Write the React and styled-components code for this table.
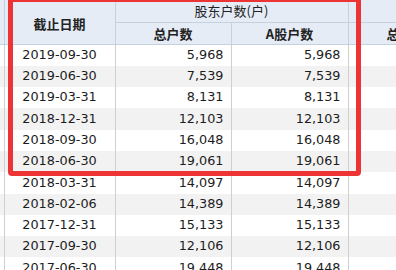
import React from "react";
import styled, { createGlobalStyle } from "styled-components";

const Global = createGlobalStyle`
  html, body { margin: 0; padding: 0; background: #ffffff; }
  body { font-family: "DejaVu Sans", "Noto Sans CJK SC", sans-serif; }
`;

const Page = styled.div`
  position: relative;
  width: 396px;
  height: 270px;
  overflow: hidden;
  background: #ffffff;
`;

const Table = styled.table`
  border-collapse: collapse;
  table-layout: fixed;
  width: 464px;
  margin-top: -2px;
  font-family: "DejaVu Sans", "Noto Sans CJK SC", sans-serif;
  font-size: 12.8px;
  color: #1c1c1c;
`;

const HeadCell = styled.th`
  background: #e5ecf6;
  border-right: 1px solid #c6d1de;
  border-bottom: 1px solid #c6d1de;
  font-family: "Noto Sans CJK SC", sans-serif;
  font-size: 13px;
  font-weight: ${(p) => (p.$light ? 400 : 700)};
  color: #222;
  text-align: center;
  padding: ${(p) => (p.$tall ? "4px 0 0 0" : "0")};
  white-space: nowrap;
  overflow: hidden;
  height: ${(p) => p.$h}px;
  line-height: 1;
`;

const Row = styled.tr`
  height: 21.3px;
  background: ${(p) => (p.$alt ? "#f2f2f2" : "#ffffff")};
`;

const Cell = styled.td`
  border-right: 1px solid #cfcfcf;
  padding: ${(p) => (p.$num ? "0 7px 0 0" : "0")};
  text-align: ${(p) => (p.$num ? "right" : "center")};
  white-space: nowrap;
  overflow: hidden;
  line-height: 1;
`;

const Highlight = styled.div`
  position: absolute;
  left: 8px;
  top: -3px;
  width: 353px;
  height: 179px;
  box-sizing: border-box;
  border: 5px solid #ec3434;
  border-radius: 4px;
  pointer-events: none;
`;

const rows = [
  ["2019-09-30", "5,968", "5,968"],
  ["2019-06-30", "7,539", "7,539"],
  ["2019-03-31", "8,131", "8,131"],
  ["2018-12-31", "12,103", "12,103"],
  ["2018-09-30", "16,048", "16,048"],
  ["2018-06-30", "19,061", "19,061"],
  ["2018-03-31", "14,097", "14,097"],
  ["2018-02-06", "14,389", "14,389"],
  ["2017-12-31", "15,133", "15,133"],
  ["2017-09-30", "12,106", "12,106"],
  ["2017-06-30", "19,448", "19,448"],
];

export default function App() {
  return (
    <Page>
      <Global />
      <Table>
        <colgroup>
          <col style={{ width: 4 }} />
          <col style={{ width: 111 }} />
          <col style={{ width: 116 }} />
          <col style={{ width: 117 }} />
          <col style={{ width: 116 }} />
        </colgroup>
        <thead>
          <tr>
            <HeadCell rowSpan={2} $h={24} />
            <HeadCell rowSpan={2} $tall $h={24}>截止日期</HeadCell>
            <HeadCell colSpan={2} $light $h={24}>股东户数(户)</HeadCell>
            <HeadCell $h={24} />
          </tr>
          <tr>
            <HeadCell $h={21}>总户数</HeadCell>
            <HeadCell $h={21}>A股户数</HeadCell>
            <HeadCell $h={21}>总户数</HeadCell>
          </tr>
        </thead>
        <tbody>
          {rows.map((r, i) => (
            <Row key={r[0]} $alt={i % 2 === 1}>
              <Cell />
              <Cell>{r[0]}</Cell>
              <Cell $num>{r[1]}</Cell>
              <Cell $num>{r[2]}</Cell>
              <Cell $num />
            </Row>
          ))}
        </tbody>
      </Table>
      <Highlight />
    </Page>
  );
}
